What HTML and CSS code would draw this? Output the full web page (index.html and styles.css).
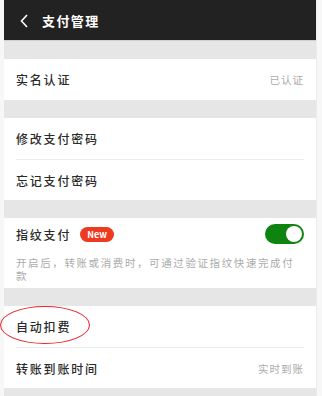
FILE: index.html
```html
<!DOCTYPE html>
<html lang="zh-CN">

<head>
    <meta charset="UTF-8">
    <meta name="viewport" content="width=device-width, initial-scale=1.0">
    <title>支付管理</title>
    <link rel="stylesheet" href="styles.css">
</head>

<body>
    <div class="page">
        <div class="topbar">
            <svg class="back" width="8" height="14" viewBox="0 0 8 14">
                <polyline points="7,1 1.5,7 7,13" fill="none" stroke="#fff" stroke-width="1.6" />
            </svg>
            <span class="title">支付管理</span>
        </div>

        <div class="group">
            <div class="cell">
                <span class="label">实名认证</span>
                <span class="value">已认证</span>
            </div>
        </div>

        <div class="group">
            <div class="cell">
                <span class="label">修改支付密码</span>
            </div>
            <div class="cell">
                <span class="label">忘记支付密码</span>
            </div>
        </div>

        <div class="group">
            <div class="finger">
                <div class="finger-head">
                    <span class="label">指纹支付</span>
                    <span class="badge">New</span>
                    <span class="switch"><span class="knob"></span></span>
                </div>
                <p class="desc">开启后，转账或消费时，可通过验证指纹快速完成付款</p>
            </div>
        </div>

        <div class="group">
            <div class="cell marked">
                <span class="label">自动扣费</span>
                <span class="ring"></span>
            </div>
            <div class="cell">
                <span class="label">转账到账时间</span>
                <span class="value">实时到账</span>
            </div>
        </div>
    </div>
</body>

</html>
```

FILE: styles.css
```css
html,
body {
    margin: 0;
    padding: 0;
}

body {
    font-family: "Noto Sans CJK SC", "Noto Sans", sans-serif;
    background-color: #f7f7f7;
    height: 396px;
    overflow: hidden;
}

.page {
    position: relative;
    width: 312px;
    height: 396px;
    margin-left: 4px;
    background-color: #e6e6e6;
    border-right: 1px solid #ececec;
}

.topbar {
    display: flex;
    align-items: center;
    height: 41px;
    padding-left: 16px;
    background-color: #222;
    border-bottom: 1px solid #cfcfcf;
    box-sizing: border-box;
}

.back {
    display: block;
    margin-top: 1px;
}

.title {
    margin-left: 14px;
    color: #fff;
    font-size: 13px;
    font-weight: bold;
    letter-spacing: 1.4px;
}

.group {
    margin-top: 18px;
    padding: 0 12px;
    background-color: #fff;
}

.cell {
    position: relative;
    display: flex;
    align-items: center;
    justify-content: space-between;
    height: 41px;
    border-top: 1px solid #ececec;
    box-sizing: border-box;
}

.cell:first-child {
    border-top: none;
}

.label {
    color: #2a2a2a;
    font-size: 12px;
    font-weight: 500;
    letter-spacing: 1.8px;
}

.value {
    color: #ababab;
    font-size: 10.5px;
    letter-spacing: 1px;
}

.finger {
    padding: 6px 0 6px;
}

.finger-head {
    display: flex;
    align-items: center;
    height: 20px;
}

.badge {
    margin-left: 9px;
    padding: 0 7px;
    height: 15px;
    line-height: 15px;
    border-radius: 8px;
    background-color: #ef3a22;
    color: #fff;
    font-size: 9px;
    font-weight: bold;
}

.switch {
    position: relative;
    margin-left: auto;
    width: 39px;
    height: 20px;
    border-radius: 10px;
    background-color: #0f830f;
}

.knob {
    position: absolute;
    top: 2px;
    right: 2px;
    width: 16px;
    height: 16px;
    border-radius: 50%;
    background-color: #fff;
}

.desc {
    margin: 12px 0 0;
    color: #ababab;
    font-size: 10.5px;
    line-height: 13px;
    letter-spacing: 1.6px;
}

.ring {
    position: absolute;
    left: -16px;
    top: 0;
    width: 88px;
    height: 36px;
    border: 1.8px solid #e8242a;
    border-radius: 50%;
}
```
